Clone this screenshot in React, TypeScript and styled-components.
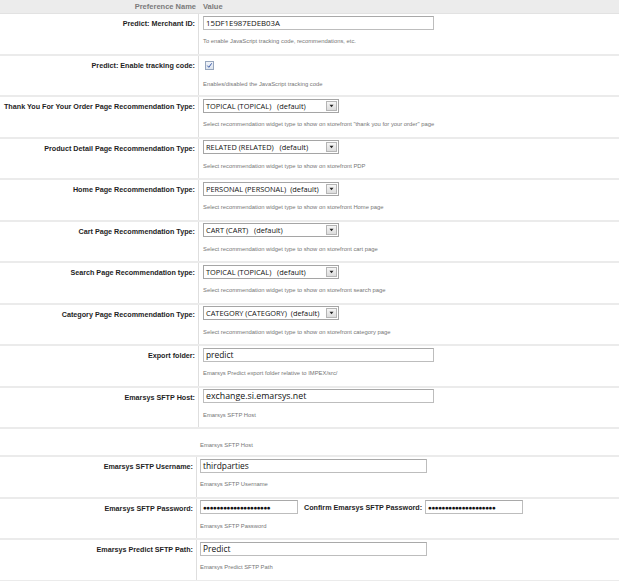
import React from 'react';
import styled, { createGlobalStyle } from 'styled-components';

const GlobalStyle = createGlobalStyle`
  html, body {
    margin: 0;
    padding: 0;
    background: #fff;
    font-family: "Liberation Sans", Arial, sans-serif;
  }
`;

const Page = styled.div`
  width: 619px;
  overflow: hidden;
`;

const HeaderRow = styled.div`
  display: grid;
  grid-template-columns: 199px 1fr;
  height: 14px;
  background: #ececec;
  border-bottom: 1px solid #e2e2e2;
  box-sizing: border-box;
  font-size: 7.5px;
  font-weight: bold;
  color: #7a7a7a;
  line-height: 13px;
`;

const HeaderName = styled.div`
  text-align: right;
  padding-right: 3px;
`;

const HeaderValue = styled.div`
  padding-left: 4px;
`;

const Row = styled.div<{ $col: number; $h?: number }>`
  display: grid;
  grid-template-columns: ${(p) => p.$col}px 1fr;
  height: ${(p) => p.$h ?? 41.5}px;
  box-sizing: border-box;
  border-bottom: 2px solid #ebebeb;
`;

const Label = styled.div`
  border-right: 1px solid #dedede;
  text-align: right;
  padding: 4px 3px 0 0;
  font-size: 7.2px;
  font-weight: bold;
  color: #1e1e1e;
  line-height: 12px;
  white-space: nowrap;
`;

const Value = styled.div<{ $pad: number }>`
  display: flex;
  flex-direction: column;
  align-items: flex-start;
  padding: 1.5px 0 0 ${(p) => p.$pad}px;
`;

const Line = styled.div`
  display: flex;
  align-items: center;
  height: 14px;
`;

const Input = styled.div<{ $w: number; $size?: number }>`
  width: ${(p) => p.$w}px;
  height: 14px;
  box-sizing: border-box;
  border: 1px solid #bdbdbd;
  border-top-color: #a9a9a9;
  background: #fff;
  font-family: "Open Sans", "Liberation Sans", sans-serif;
  font-size: ${(p) => p.$size ?? 7.8}px;
  color: #111;
  line-height: 12px;
  padding-left: 2px;
  white-space: nowrap;
  overflow: hidden;
`;

const Dots = styled.span`
  font-size: 6.4px;
  letter-spacing: -0.5px;
  position: relative;
  top: -0.5px;
`;

const InlineLabel = styled.span`
  font-size: 7.2px;
  font-weight: bold;
  color: #1e1e1e;
  margin: 0 3px 0 6px;
  white-space: nowrap;
`;

const Select = styled.div`
  width: 136px;
  height: 14px;
  box-sizing: border-box;
  border: 1px solid #a5a5a5;
  display: flex;
  align-items: stretch;
  font-family: "Open Sans", "Liberation Sans", sans-serif;
  font-size: 7.4px;
  color: #111;
  line-height: 12px;
  white-space: pre;
`;

const SelectText = styled.div`
  flex: 1;
  padding-left: 2px;
  overflow: hidden;
`;

const SelectArrow = styled.div`
  width: 9px;
  margin: 1px 1px 1px 0;
  border: 1px solid #b5b5b5;
  background: linear-gradient(#f6f6f6, #dcdcdc);
  display: flex;
  align-items: center;
  justify-content: center;
`;

const Check = styled.div`
  width: 9px;
  height: 9px;
  box-sizing: border-box;
  border: 1px solid #97a6bd;
  background: linear-gradient(#f1f4f9, #dde4ee);
  margin: 2px 0 0 2px;
  display: flex;
  align-items: center;
  justify-content: center;
`;

const Desc = styled.div<{ $top?: number }>`
  margin-top: ${(p) => p.$top ?? 8.5}px;
  font-size: 5.85px;
  color: #767676;
  white-space: nowrap;
`;

const Spacer = styled.div`
  height: 28px;
  padding: 12.5px 0 0 200px;
  box-sizing: border-box;
  border-bottom: 2px solid #ebebeb;
`;

const Arrow = () => (
  <svg width="5" height="4" viewBox="0 0 5 4">
    <path d="M0.5 0.8 H4.5 L2.5 3.2 Z" fill="#222" />
  </svg>
);

type Field =
  | { kind: 'text'; label: string; value: string; desc: string; size?: number }
  | { kind: 'check'; label: string; desc: string }
  | { kind: 'select'; label: string; value: string; desc: string };

const topFields: Field[] = [
  {
    kind: 'text',
    label: 'Predict: Merchant ID:',
    value: '15DF1E987EDEB03A',
    desc: 'To enable JavaScript tracking code, recommendations, etc.',
  },
  {
    kind: 'check',
    label: 'Predict: Enable tracking code:',
    desc: 'Enables/disabled the JavaScript tracking code',
  },
  {
    kind: 'select',
    label: 'Thank You For Your Order Page Recommendation Type:',
    value: 'TOPICAL (TOPICAL)   (default)',
    desc: 'Select recommendation widget type to show on storefront "thank you for your order" page',
  },
  {
    kind: 'select',
    label: 'Product Detail Page Recommendation Type:',
    value: 'RELATED (RELATED)   (default)',
    desc: 'Select recommendation widget type to show on storefront PDP',
  },
  {
    kind: 'select',
    label: 'Home Page Recommendation Type:',
    value: 'PERSONAL (PERSONAL)  (default)',
    desc: 'Select recommendation widget type to show on storefront Home page',
  },
  {
    kind: 'select',
    label: 'Cart Page Recommendation Type:',
    value: 'CART (CART)   (default)',
    desc: 'Select recommendation widget type to show on storefront cart page',
  },
  {
    kind: 'select',
    label: 'Search Page Recommendation type:',
    value: 'TOPICAL (TOPICAL)   (default)',
    desc: 'Select recommendation widget type to show on storefront search page',
  },
  {
    kind: 'select',
    label: 'Category Page Recommendation Type:',
    value: 'CATEGORY (CATEGORY)  (default)',
    desc: 'Select recommendation widget type to show on storefront category page',
  },
  {
    kind: 'text',
    label: 'Export folder:',
    value: 'predict',
    desc: 'Emarsys Predict export folder relative to IMPEX/src/',
    size: 8.4,
  },
  {
    kind: 'text',
    label: 'Emarsys SFTP Host:',
    value: 'exchange.si.emarsys.net',
    desc: 'Emarsys SFTP Host',
    size: 8.8,
  },
];

const PASSWORD = '●●●●●●●●●●●●●●●●●●●●';

const FieldRow: React.FC<{ field: Field }> = ({ field }) => (
  <Row $col={199}>
    <Label>{field.label}</Label>
    <Value $pad={4}>
      <Line>
        {field.kind === 'text' && (
          <Input $w={231} $size={field.size}>
            {field.value}
          </Input>
        )}
        {field.kind === 'select' && (
          <Select>
            <SelectText>{field.value}</SelectText>
            <SelectArrow>
              <Arrow />
            </SelectArrow>
          </Select>
        )}
        {field.kind === 'check' && (
          <Check>
            <svg width="7" height="7" viewBox="0 0 7 7">
              <path d="M1.3 3.6 L2.8 5.3 L5.7 1.3" fill="none" stroke="#3a5aa8" strokeWidth="1" />
            </svg>
          </Check>
        )}
      </Line>
      <Desc $top={field.kind === 'check' ? 10 : 8.5}>{field.desc}</Desc>
    </Value>
  </Row>
);

const App: React.FC = () => (
  <Page>
    <GlobalStyle />
    <HeaderRow>
      <HeaderName>Preference Name</HeaderName>
      <HeaderValue>Value</HeaderValue>
    </HeaderRow>
    {topFields.map((f) => (
      <FieldRow key={f.label} field={f} />
    ))}
    <Spacer>
      <Desc $top={0}>Emarsys SFTP Host</Desc>
    </Spacer>
    <Row $col={197}>
      <Label>Emarsys SFTP Username:</Label>
      <Value $pad={3}>
        <Line>
          <Input $w={227} $size={8.4}>thirdparties</Input>
        </Line>
        <Desc>Emarsys SFTP Username</Desc>
      </Value>
    </Row>
    <Row $col={197}>
      <Label>Emarsys SFTP Password:</Label>
      <Value $pad={3}>
        <Line>
          <Input $w={98}>
            <Dots>{PASSWORD}</Dots>
          </Input>
          <InlineLabel>Confirm Emarsys SFTP Password:</InlineLabel>
          <Input $w={98}>
            <Dots>{PASSWORD}</Dots>
          </Input>
        </Line>
        <Desc>Emarsys SFTP Password</Desc>
      </Value>
    </Row>
    <Row $col={197}>
      <Label>Emarsys Predict SFTP Path:</Label>
      <Value $pad={3}>
        <Line>
          <Input $w={227} $size={8.4}>Predict</Input>
        </Line>
        <Desc>Emarsys Predict SFTP Path</Desc>
      </Value>
    </Row>
    <Row $col={197}>
      <Label />
      <Value $pad={0}>
        <Input $w={422} />
      </Value>
    </Row>
  </Page>
);

export default App;
